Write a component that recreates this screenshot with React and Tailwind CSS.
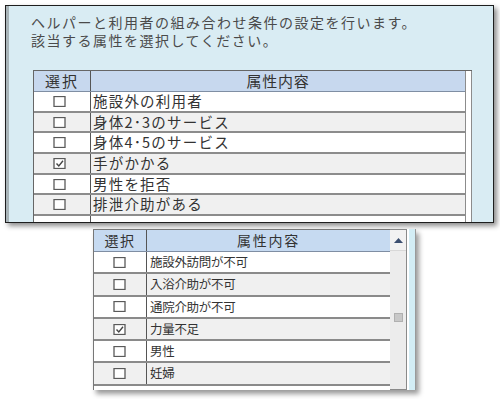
import React from 'react';

const jp = { fontFamily: '"Noto Sans CJK JP", "Noto Sans", sans-serif' };

const topRows = [
  { label: '施設外の利用者', checked: false },
  { label: '身体2･3のサービス', checked: false },
  { label: '身体4･5のサービス', checked: false },
  { label: '手がかかる', checked: true },
  { label: '男性を拒否', checked: false },
  { label: '排泄介助がある', checked: false },
  { label: '', checked: null },
];

const bottomRows = [
  { label: '施設外訪問が不可', checked: false },
  { label: '入浴介助が不可', checked: false },
  { label: '通院介助が不可', checked: false },
  { label: '力量不足', checked: true },
  { label: '男性', checked: false },
  { label: '妊婦', checked: false },
];

function Box({ checked, size = 11 }) {
  return (
    <svg width={size + 2} height={size} viewBox="0 0 13 11" className="block">
      <rect x="1" y="0.5" width="11" height="10" fill="white" stroke="#5a5a5a" strokeWidth="1.3" />
      {checked && <polyline points="3.5,5.5 5.8,8 10,2.8" fill="none" stroke="#444" strokeWidth="1.4" />}
    </svg>
  );
}

export default function App() {
  return (
    <div className="w-[500px] h-[399px] bg-white overflow-hidden" style={jp}>
      {/* upper panel */}
      <div className="ml-[5px] mt-[5px] w-[489px] h-[218px] border border-[#1e1e1e] bg-[#d9ecf3] shadow-[3px_3px_5px_rgba(0,0,0,0.45)] overflow-hidden">
        <div className="h-full border-l-[3px] border-[#a9b4b8] pt-[7px] pl-[22px]">
          <div className="text-[14px] leading-[18px] tracking-[1.5px] text-[#4a4a4a]">
            <div>ヘルパーと利用者の組み合わせ条件の設定を行います。</div>
            <div>該当する属性を選択してください。</div>
          </div>
          <div className="mt-[21px] ml-[2px] w-[439px] flex border-t border-l border-[#666]">
            <div className="w-[432px] flex flex-col">
              <div className="h-[21px] flex bg-[#c7d8ee] border-b border-[#7f8ea3] text-[15px] leading-[20px] text-[#333]">
                <div className="w-[57px] border-r border-[#555] text-center tracking-[2px]">選択</div>
                <div className="flex-1 text-center tracking-[0.8px]">属性内容</div>
              </div>
              {topRows.map((r, i) => (
                <div
                  key={i}
                  className={`h-[20.7px] flex border-b-2 border-[#8c8c8c] text-[14.5px] leading-[18px] text-[#333] ${
                    i % 2 === 0 ? 'bg-white' : 'bg-[#f0f0f0]'
                  }`}
                >
                  <div className="w-[57px] border-r border-[#555] flex items-center justify-center pr-[5px]">
                    {r.checked !== null && <Box checked={r.checked} />}
                  </div>
                  <div className="flex-1 pl-[2px] tracking-[1.2px] whitespace-nowrap">{r.label}</div>
                </div>
              ))}
            </div>
            <div className="w-[7px] bg-white border-l border-r border-[#8c8c8c]" />
          </div>
        </div>
      </div>

      {/* lower panel */}
      <div className="ml-[93px] mt-[6px] w-[323px] h-[161px] flex shadow-[3px_4px_5px_rgba(0,0,0,0.4)]">
        <div className="w-[297px] flex flex-col border-t border-l border-[#777] bg-white">
          <div className="h-[22px] flex bg-[#c6daf1] border-b border-[#7f8ea3] text-[14px] leading-[21px] text-[#333]">
            <div className="w-[53px] border-r border-[#555] text-center tracking-[1.5px]">選択</div>
            <div className="flex-1 text-center tracking-[1.75px]">属性内容</div>
          </div>
          {bottomRows.map((r, i) => (
            <div
              key={i}
              className={`h-[22.3px] flex border-b-2 border-[#8a8a8a] text-[12.5px] leading-[19px] text-[#333] ${
                i % 2 === 0 ? 'bg-white' : 'bg-[#f0f0f0]'
              }`}
            >
              <div className="w-[53px] border-r border-[#555] flex items-center justify-center pr-[2px]">
                <Box checked={r.checked} />
              </div>
              <div className="flex-1 pl-[3px] whitespace-nowrap tracking-[-0.3px]">{r.label}</div>
            </div>
          ))}
        </div>
        <div className="w-[17px] flex flex-col border-t border-r border-b border-[#8a8a8a] bg-[#ececec]">
          <div className="h-[21px] flex items-center justify-center bg-[#f2f2f2] border-b border-[#d8d8d8]">
            <svg width="9" height="5" viewBox="0 0 9 5">
              <polygon points="4.5,0 9,5 0,5" fill="#3c4f70" />
            </svg>
          </div>
          <div className="flex-1 flex justify-center pt-[62px]">
            <div className="w-[9px] h-[9px] bg-[#c8c8c8] border border-[#b0b0b0]" />
          </div>
        </div>
        <div className="w-[9px] border-l-2 border-white bg-[#d3edf5] border-r border-r-[#9a9a9a]" />
      </div>
    </div>
  );
}
